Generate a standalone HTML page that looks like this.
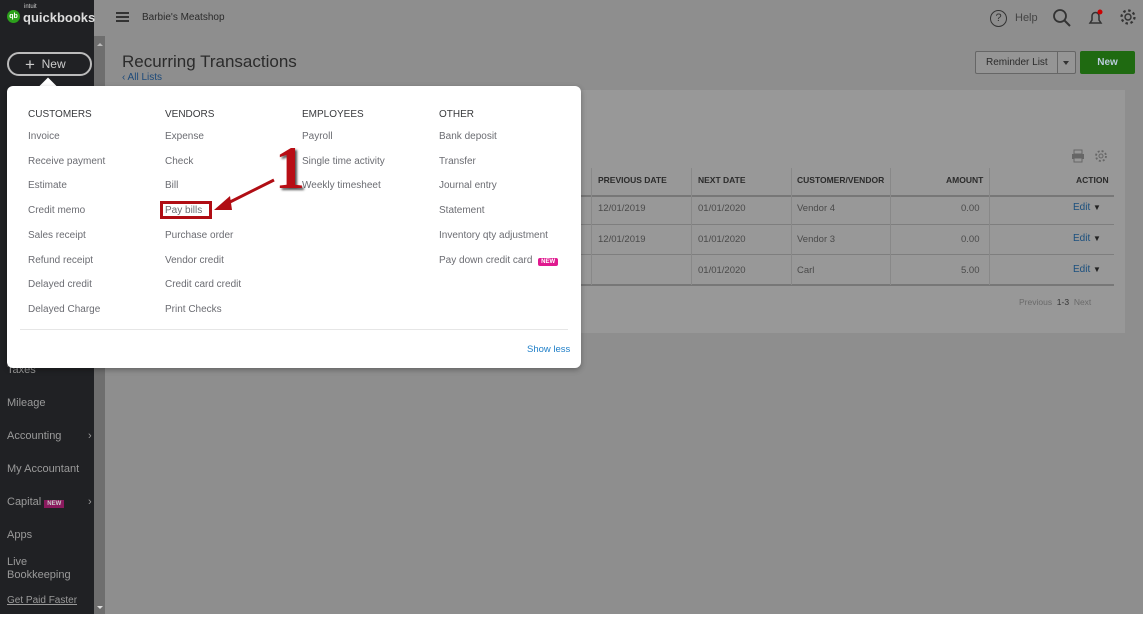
<!DOCTYPE html>
<html><head><meta charset="utf-8"><style>
*{box-sizing:border-box;margin:0;padding:0}
body{width:1143px;height:618px;overflow:hidden;background:#8e8e8e;font-family:"Liberation Sans",sans-serif;position:relative}
.a{position:absolute}
.side{left:0;top:0;width:94px;height:614px;background:#202124}
.sb{left:94px;top:36px;width:11px;height:578px;background:#6e6e6e}
.panel{left:108px;top:90px;width:1017px;height:243px;background:#989898}
.nav{color:#9a9a9a;font-size:11px;left:7px}
.dd{left:7px;top:86px;width:574px;height:282px;background:#fff;border-radius:6px;box-shadow:0 2px 6px rgba(0,0,0,.3)}
.h{font-size:10px;color:#393a3d;position:absolute;top:23px}
.it{font-size:10px;color:#6b6c72;position:absolute}
.th{font-size:8.5px;font-weight:bold;color:#2b2b2b;position:absolute;top:175px}
.td{font-size:9.5px;color:#4a4a4a;position:absolute}
.vl{width:1px;background:#888}
</style></head><body>
<div class="a side"></div>
<div class="a sb"></div>
<div class="a" style="left:97px;top:40px;width:0;height:0;border:3px solid transparent;border-bottom-color:#bbb"></div>
<div class="a" style="left:97px;top:606px;width:0;height:0;border:3px solid transparent;border-top-color:#ddd"></div>
<div class="a" style="left:7px;top:10px;width:13px;height:13px;border-radius:50%;background:#2ca01c;color:#fff;font-size:7px;font-weight:bold;text-align:center;line-height:13px">qb</div>
<div class="a" style="left:24px;top:4px;color:#ccc;font-size:6px">intuit</div>
<div class="a" style="left:23px;top:10px;color:#ddd;font-size:13px;font-weight:bold">quickbooks</div>
<div class="a" style="left:7px;top:52px;width:85px;height:24px;border:2px solid #bbb;border-radius:12px;color:#ccc;font-size:12px;padding-left:16px;line-height:20px"><span style="font-size:17px;vertical-align:-2px">+</span>&nbsp; New</div>
<div class="a nav" style="top:364px">Taxes</div>
<div class="a nav" style="top:397px">Mileage</div>
<div class="a nav" style="top:430px">Accounting</div>
<div class="a nav" style="left:88px;top:430px">›</div>
<div class="a nav" style="top:463px">My Accountant</div>
<div class="a nav" style="top:496px">Capital <span style="background:#8a1a5e;color:#ccc;font-size:6px;font-weight:bold;padding:1px 3px">NEW</span></div>
<div class="a nav" style="left:88px;top:496px">›</div>
<div class="a nav" style="top:529px">Apps</div>
<div class="a nav" style="top:556px;line-height:13px">Live<br>Bookkeeping</div>
<div class="a nav" style="top:595px;font-size:10px;text-decoration:underline">Get Paid Faster</div>
<div class="a" style="left:0;top:614px;width:1143px;height:4px;background:#fff"></div>

<div class="a" style="left:116px;top:12px;width:13px;height:2px;background:#333;box-shadow:0 4px #333,0 8px #333"></div>
<div class="a" style="left:142px;top:12px;font-size:10px;color:#2b2b2b">Barbie's Meatshop</div>
<div class="a" style="left:990px;top:10px;width:17px;height:17px;border:1.5px solid #333;border-radius:50%;font-size:11px;text-align:center;line-height:14px;color:#333">?</div>
<div class="a" style="left:1015px;top:12px;font-size:11px;color:#444">Help</div>
<svg class="a" style="left:1052px;top:8px" width="20" height="20"><circle cx="8" cy="8" r="6" fill="none" stroke="#333" stroke-width="1.8"/><path d="M12 12l6 6" stroke="#333" stroke-width="2"/></svg>
<svg class="a" style="left:1087px;top:8px" width="18" height="20"><path d="M3 15h11l-2-3V8a3.5 3.5 0 0 0-7 0v4z" fill="none" stroke="#333" stroke-width="1.5"/><circle cx="13" cy="4" r="2.5" fill="#c00"/></svg>
<svg class="a" style="left:1119px;top:8px" width="18" height="18"><circle cx="9" cy="9" r="3" fill="none" stroke="#333" stroke-width="1.4"/><circle cx="9" cy="9" r="6.5" fill="none" stroke="#333" stroke-width="2.2" stroke-dasharray="2.5 2.6"/></svg>

<div class="a" style="left:122px;top:52px;font-size:17px;color:#2b2b2b">Recurring Transactions</div>
<div class="a" style="left:122px;top:72px;font-size:10px;color:#1d4a7a">‹ All Lists</div>
<div class="a" style="left:975px;top:51px;width:101px;height:23px;border:1px solid #666;border-radius:2px;background:#959595"></div>
<div class="a" style="left:986px;top:57px;font-size:10px;color:#2b2b2b">Reminder List</div>
<div class="a" style="left:1057px;top:51px;width:1px;height:23px;background:#666"></div>
<div class="a" style="left:1063px;top:61px;border:3px solid transparent;border-top:4px solid #333"></div>
<div class="a" style="left:1080px;top:51px;width:55px;height:23px;background:#1f6a11;border-radius:2px;color:#bcd;font-size:10px;font-weight:bold;text-align:center;line-height:23px">New</div>

<div class="a panel"></div>
<svg class="a" style="left:1071px;top:149px" width="14" height="14"><rect x="3" y="1" width="8" height="4" fill="none" stroke="#666"/><rect x="1" y="5" width="12" height="5" fill="#666"/><rect x="3" y="9" width="8" height="4" fill="#999" stroke="#666"/></svg>
<svg class="a" style="left:1094px;top:149px" width="14" height="14"><circle cx="7" cy="7" r="2" fill="none" stroke="#666"/><circle cx="7" cy="7" r="5" fill="none" stroke="#666" stroke-width="1.8" stroke-dasharray="2 2"/></svg>
<div class="a" style="left:580px;top:195px;width:534px;height:2px;background:#777"></div>
<div class="a" style="left:580px;top:224px;width:534px;height:1px;background:#7e7e7e"></div>
<div class="a" style="left:580px;top:254px;width:534px;height:1px;background:#7e7e7e"></div>
<div class="a" style="left:580px;top:284px;width:534px;height:2px;background:#777"></div>
<div class="a vl" style="left:591px;top:168px;height:117px"></div>
<div class="a vl" style="left:691px;top:168px;height:117px"></div>
<div class="a vl" style="left:791px;top:168px;height:117px"></div>
<div class="a vl" style="left:890px;top:168px;height:117px"></div>
<div class="a vl" style="left:989px;top:168px;height:117px"></div>
<div class="th" style="left:598px">PREVIOUS DATE</div>
<div class="th" style="left:698px">NEXT DATE</div>
<div class="th" style="left:797px">CUSTOMER/VENDOR</div>
<div class="th" style="left:946px">AMOUNT</div>
<div class="th" style="left:1076px">ACTION</div>
<div class="td" style="left:598px;top:203px">12/01/2019</div><div class="td" style="left:698px;top:203px">01/01/2020</div><div class="td" style="left:797px;top:203px">Vendor 4</div><div class="td" style="left:961px;top:203px">0.00</div>
<div class="td" style="left:598px;top:234px">12/01/2019</div><div class="td" style="left:698px;top:234px">01/01/2020</div><div class="td" style="left:797px;top:234px">Vendor 3</div><div class="td" style="left:961px;top:234px">0.00</div>
<div class="td" style="left:698px;top:265px">01/01/2020</div><div class="td" style="left:797px;top:265px">Carl</div><div class="td" style="left:961px;top:265px">5.00</div>
<div class="td" style="left:1073px;top:202px;color:#1a4f7e;font-size:10px">Edit <span style="color:#222;font-size:8px">▼</span></div>
<div class="td" style="left:1073px;top:233px;color:#1a4f7e;font-size:10px">Edit <span style="color:#222;font-size:8px">▼</span></div>
<div class="td" style="left:1073px;top:264px;color:#1a4f7e;font-size:10px">Edit <span style="color:#222;font-size:8px">▼</span></div>
<div class="td" style="left:1019px;top:297px;font-size:8.5px;color:#6a6a6a">Previous <span style="color:#333">&nbsp;1-3&nbsp;</span> Next</div>

<div class="a" style="left:42px;top:80px;width:12px;height:12px;background:#fff;transform:rotate(45deg)"></div>
<div class="a dd">
<div class="h" style="left:21px">CUSTOMERS</div>
<div class="h" style="left:158px">VENDORS</div>
<div class="h" style="left:295px">EMPLOYEES</div>
<div class="h" style="left:432px">OTHER</div>
<div class="it" style="left:21px;top:45px">Invoice</div>
<div class="it" style="left:21px;top:70px">Receive payment</div>
<div class="it" style="left:21px;top:94px">Estimate</div>
<div class="it" style="left:21px;top:119px">Credit memo</div>
<div class="it" style="left:21px;top:144px">Sales receipt</div>
<div class="it" style="left:21px;top:169px">Refund receipt</div>
<div class="it" style="left:21px;top:193px">Delayed credit</div>
<div class="it" style="left:21px;top:218px">Delayed Charge</div>
<div class="it" style="left:158px;top:45px">Expense</div>
<div class="it" style="left:158px;top:70px">Check</div>
<div class="it" style="left:158px;top:94px">Bill</div>
<div class="it" style="left:158px;top:119px">Pay bills</div>
<div class="it" style="left:158px;top:144px">Purchase order</div>
<div class="it" style="left:158px;top:169px">Vendor credit</div>
<div class="it" style="left:158px;top:193px">Credit card credit</div>
<div class="it" style="left:158px;top:218px">Print Checks</div>
<div class="it" style="left:295px;top:45px">Payroll</div>
<div class="it" style="left:295px;top:70px">Single time activity</div>
<div class="it" style="left:295px;top:94px">Weekly timesheet</div>
<div class="it" style="left:432px;top:45px">Bank deposit</div>
<div class="it" style="left:432px;top:70px">Transfer</div>
<div class="it" style="left:432px;top:94px">Journal entry</div>
<div class="it" style="left:432px;top:119px">Statement</div>
<div class="it" style="left:432px;top:144px">Inventory qty adjustment</div>
<div class="it" style="left:432px;top:169px">Pay down credit card <span style="background:#e0198f;color:#fff;font-size:6px;font-weight:bold;padding:1px 3px;margin-left:3px;border-radius:2px">NEW</span></div>
<div style="position:absolute;left:13px;top:243px;width:548px;height:1px;background:#e6e6e6"></div>
<div class="it" style="left:520px;top:258px;color:#1f7fc8;font-size:9.5px">Show less</div>
</div>
<div class="a" style="left:160px;top:201px;width:52px;height:18px;border:3px solid #b00d14"></div>
<svg class="a" style="left:210px;top:170px" width="70" height="50"><path d="M64 10L12 36" stroke="#b00d14" stroke-width="3"/><path d="M4 40L20 26L22 40Z" fill="#b00d14"/></svg>
<div class="a" style="left:275px;top:138px;font-family:'Liberation Serif',serif;font-size:60px;font-weight:bold;color:#b80e15;text-shadow:2px 2px 2px #555;line-height:60px">1</div>
</body></html>
